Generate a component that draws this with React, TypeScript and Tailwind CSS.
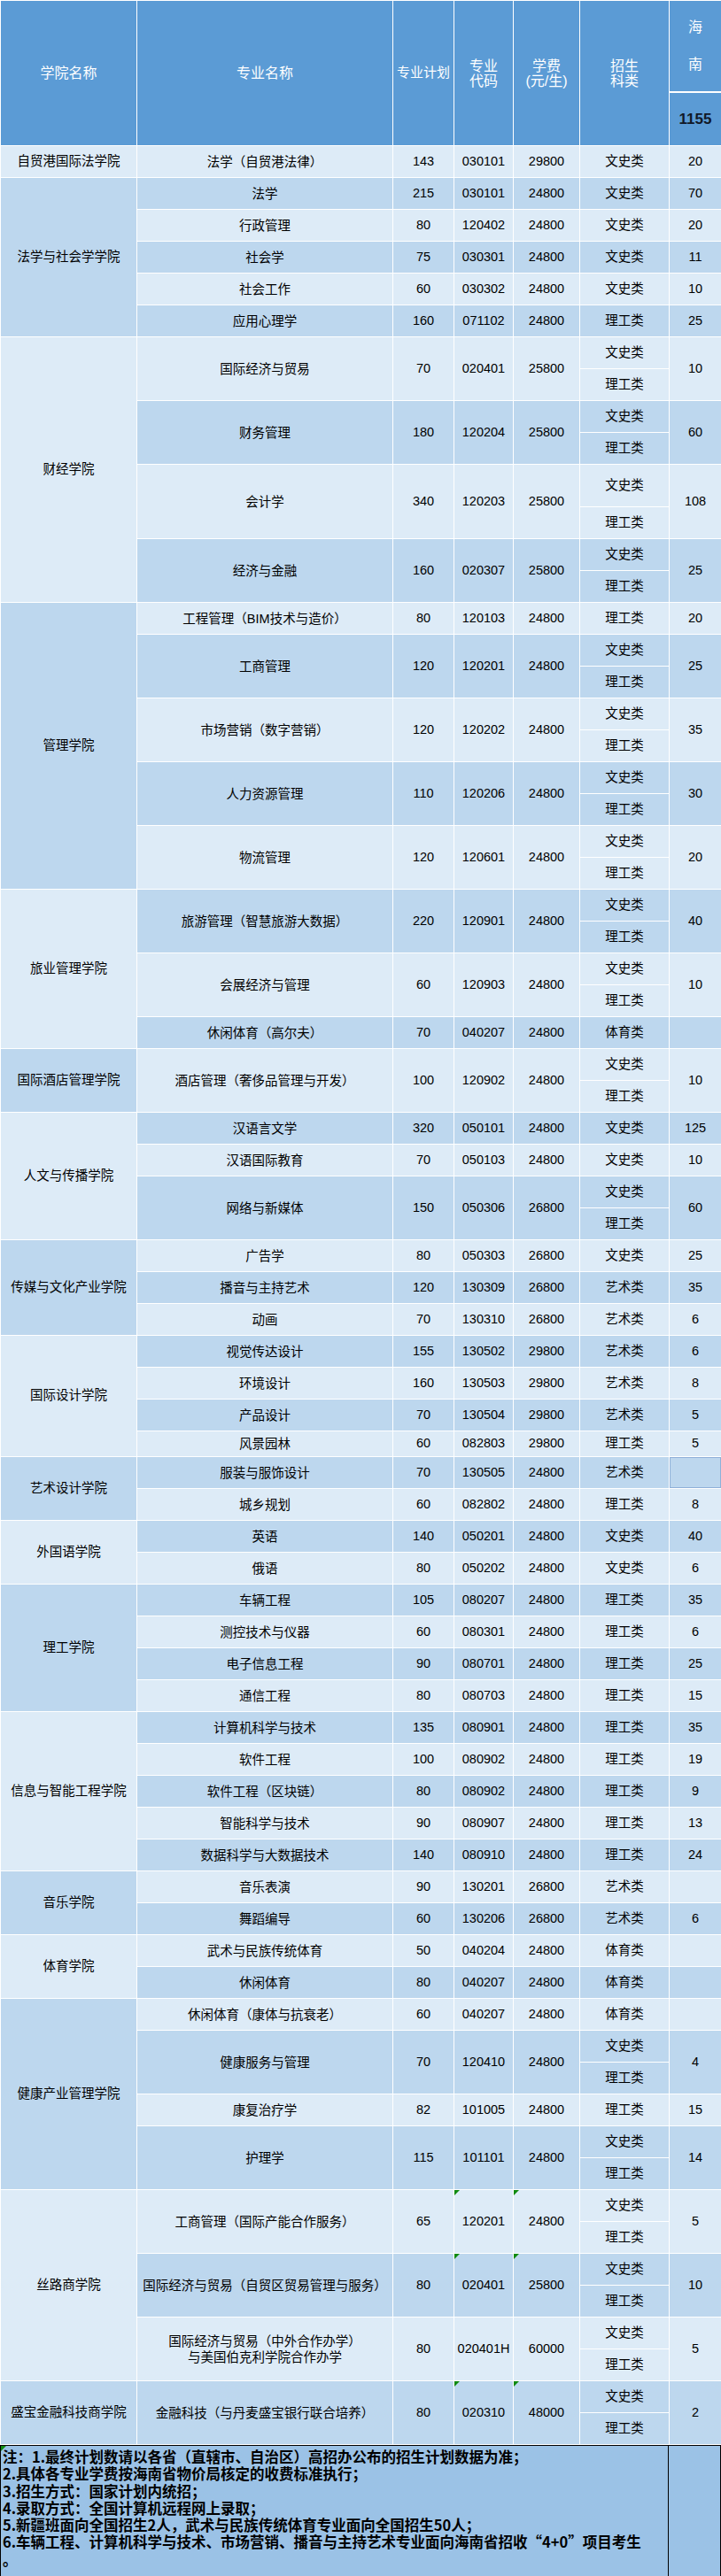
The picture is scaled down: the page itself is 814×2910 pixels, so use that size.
import React from "react";

type Major = {
  name: string[];
  plan: string;
  code: string;
  fee: string;
  types: string[];
  hn: string;
  h?: string[];
  tri?: boolean;
  outline?: boolean;
};

type College = { name: string; majors: Major[] };

const B = ["文史类", "理工类"];
const W = ["文史类"];
const S = ["理工类"];
const Y = ["艺术类"];
const T = ["体育类"];

const m = (
  name: string,
  plan: string,
  code: string,
  fee: string,
  types: string[],
  hn: string,
  extra: Partial<Major> = {}
): Major => ({ name: [name], plan, code, fee, types, hn, ...extra });

const colleges: College[] = [
  { name: "自贸港国际法学院", majors: [m("法学（自贸港法律）", "143", "030101", "29800", W, "20")] },
  {
    name: "法学与社会学学院",
    majors: [
      m("法学", "215", "030101", "24800", W, "70"),
      m("行政管理", "80", "120402", "24800", W, "20"),
      m("社会学", "75", "030301", "24800", W, "11"),
      m("社会工作", "60", "030302", "24800", W, "10"),
      m("应用心理学", "160", "071102", "24800", S, "25"),
    ],
  },
  {
    name: "财经学院",
    majors: [
      m("国际经济与贸易", "70", "020401", "25800", B, "10"),
      m("财务管理", "180", "120204", "25800", B, "60"),
      m("会计学", "340", "120203", "25800", B, "108", { h: ["h-[48px]", "h-[36px]"] }),
      m("经济与金融", "160", "020307", "25800", B, "25"),
    ],
  },
  {
    name: "管理学院",
    majors: [
      m("工程管理（BIM技术与造价）", "80", "120103", "24800", S, "20"),
      m("工商管理", "120", "120201", "24800", B, "25"),
      m("市场营销（数字营销）", "120", "120202", "24800", B, "35"),
      m("人力资源管理", "110", "120206", "24800", B, "30"),
      m("物流管理", "120", "120601", "24800", B, "20"),
    ],
  },
  {
    name: "旅业管理学院",
    majors: [
      m("旅游管理（智慧旅游大数据）", "220", "120901", "24800", B, "40"),
      m("会展经济与管理", "60", "120903", "24800", B, "10"),
      m("休闲体育（高尔夫）", "70", "040207", "24800", T, ""),
    ],
  },
  { name: "国际酒店管理学院", majors: [m("酒店管理（奢侈品管理与开发）", "100", "120902", "24800", B, "10")] },
  {
    name: "人文与传播学院",
    majors: [
      m("汉语言文学", "320", "050101", "24800", W, "125"),
      m("汉语国际教育", "70", "050103", "24800", W, "10"),
      m("网络与新媒体", "150", "050306", "26800", B, "60"),
    ],
  },
  {
    name: "传媒与文化产业学院",
    majors: [
      m("广告学", "80", "050303", "26800", W, "25"),
      m("播音与主持艺术", "120", "130309", "26800", Y, "35"),
      m("动画", "70", "130310", "26800", Y, "6"),
    ],
  },
  {
    name: "国际设计学院",
    majors: [
      m("视觉传达设计", "155", "130502", "29800", Y, "6"),
      m("环境设计", "160", "130503", "29800", Y, "8"),
      m("产品设计", "70", "130504", "29800", Y, "5"),
      m("风景园林", "60", "082803", "29800", S, "5", { h: ["h-[29px]"] }),
    ],
  },
  {
    name: "艺术设计学院",
    majors: [
      m("服装与服饰设计", "70", "130505", "24800", Y, "", { outline: true }),
      m("城乡规划", "60", "082802", "24800", S, "8"),
    ],
  },
  {
    name: "外国语学院",
    majors: [m("英语", "140", "050201", "24800", W, "40"), m("俄语", "80", "050202", "24800", W, "6")],
  },
  {
    name: "理工学院",
    majors: [
      m("车辆工程", "105", "080207", "24800", S, "35"),
      m("测控技术与仪器", "60", "080301", "24800", S, "6"),
      m("电子信息工程", "90", "080701", "24800", S, "25"),
      m("通信工程", "80", "080703", "24800", S, "15"),
    ],
  },
  {
    name: "信息与智能工程学院",
    majors: [
      m("计算机科学与技术", "135", "080901", "24800", S, "35"),
      m("软件工程", "100", "080902", "24800", S, "19"),
      m("软件工程（区块链）", "80", "080902", "24800", S, "9"),
      m("智能科学与技术", "90", "080907", "24800", S, "13"),
      m("数据科学与大数据技术", "140", "080910", "24800", S, "24"),
    ],
  },
  {
    name: "音乐学院",
    majors: [m("音乐表演", "90", "130201", "26800", Y, ""), m("舞蹈编导", "60", "130206", "26800", Y, "6")],
  },
  {
    name: "体育学院",
    majors: [m("武术与民族传统体育", "50", "040204", "24800", T, ""), m("休闲体育", "80", "040207", "24800", T, "")],
  },
  {
    name: "健康产业管理学院",
    majors: [
      m("休闲体育（康体与抗衰老）", "60", "040207", "24800", T, ""),
      m("健康服务与管理", "70", "120410", "24800", B, "4"),
      m("康复治疗学", "82", "101005", "24800", S, "15"),
      m("护理学", "115", "101101", "24800", B, "14"),
    ],
  },
  {
    name: "丝路商学院",
    majors: [
      m("工商管理（国际产能合作服务）", "65", "120201", "24800", B, "5", { tri: true }),
      m("国际经济与贸易（自贸区贸易管理与服务）", "80", "020401", "25800", B, "10", { tri: true }),
      {
        name: ["国际经济与贸易（中外合作办学）", "与美国伯克利学院合作办学"],
        plan: "80",
        code: "020401H",
        fee: "60000",
        types: B,
        hn: "5",
      },
    ],
  },
  {
    name: "盛宝金融科技商学院",
    majors: [m("金融科技（与丹麦盛宝银行联合培养）", "80", "020310", "48000", B, "2", { tri: true })],
  },
];

const notes = [
  "注：1.最终计划数请以各省（直辖市、自治区）高招办公布的招生计划数据为准；",
  "2.具体各专业学费按海南省物价局核定的收费标准执行；",
  "3.招生方式：国家计划内统招；",
  "4.录取方式：全国计算机远程网上录取；",
  "5.新疆班面向全国招生2人，武术与民族传统体育专业面向全国招生50人；",
  "6.车辆工程、计算机科学与技术、市场营销、播音与主持艺术专业面向海南省招收“4+0”项目考生",
  "。",
];

const cell = "border border-white text-center align-middle p-0";

function Tri() {
  return (
    <span className="absolute left-0 top-0 w-0 h-0 border-t-[6px] border-t-[#0f8a0f] border-r-[6px] border-r-transparent" />
  );
}

export default function App() {
  const rows: React.ReactNode[] = [];
  let band = 0;

  colleges.forEach((c, ci) => {
    const span = c.majors.reduce((s, x) => s + x.types.length, 0);
    const cbg = ci % 2 === 0 ? "bg-[#ddebf7]" : "bg-[#bdd7ee]";
    c.majors.forEach((mj, mi) => {
      const bg = band % 2 === 0 ? "bg-[#ddebf7]" : "bg-[#bdd7ee]";
      band++;
      const n = mj.types.length;
      mj.types.forEach((t, ti) => {
        const h = mj.h ? mj.h[ti] : "h-[36px]";
        rows.push(
          <tr key={`${ci}-${mi}-${ti}`} className={h}>
            {mi === 0 && ti === 0 && (
              <td rowSpan={span} className={`${cell} ${cbg}`}>
                {c.name}
              </td>
            )}
            {ti === 0 && (
              <>
                <td rowSpan={n} className={`${cell} ${bg} leading-[18px]`}>
                  {mj.name.map((l) => (
                    <div key={l} className="whitespace-nowrap">
                      {l}
                    </div>
                  ))}
                </td>
                <td rowSpan={n} className={`${cell} ${bg}`}>
                  {mj.plan}
                </td>
                <td rowSpan={n} className={`${cell} ${bg} relative`}>
                  {mj.tri && <Tri />}
                  {mj.code}
                </td>
                <td rowSpan={n} className={`${cell} ${bg} relative`}>
                  {mj.tri && <Tri />}
                  {mj.fee}
                </td>
              </>
            )}
            <td className={`${cell} ${bg}`}>{t}</td>
            {ti === 0 && (
              <td
                rowSpan={n}
                className={`${cell} ${bg} ${mj.outline ? "shadow-[inset_0_0_0_1px_#8fb0d8]" : ""}`}
              >
                {mj.hn}
              </td>
            )}
          </tr>
        );
      });
    });
  });

  return (
    <div className="w-[814px] bg-white text-black text-[14.5px] font-['Liberation_Sans','Noto_Sans_CJK_SC',sans-serif]">
      <table className="w-[814px] table-fixed border-collapse">
        <colgroup>
          <col className="w-[154px]" />
          <col className="w-[289px]" />
          <col className="w-[69px]" />
          <col className="w-[67px]" />
          <col className="w-[75px]" />
          <col className="w-[101px]" />
          <col className="w-[59px]" />
        </colgroup>
        <thead>
          <tr className="h-[103px]">
            <th rowSpan={2} className={`${cell} bg-[#5b9bd5] text-white font-normal text-[16px]`}>
              学院名称
            </th>
            <th rowSpan={2} className={`${cell} bg-[#5b9bd5] text-white font-normal text-[16px]`}>
              专业名称
            </th>
            <th rowSpan={2} className={`${cell} bg-[#5b9bd5] text-white font-normal text-[15px] whitespace-nowrap`}>
              专业计划
            </th>
            <th rowSpan={2} className={`${cell} bg-[#5b9bd5] text-white font-normal text-[16px] leading-[17px]`}>
              专业
              <br />
              代码
            </th>
            <th rowSpan={2} className={`${cell} bg-[#5b9bd5] text-white font-normal text-[16px] leading-[17px]`}>
              学费
              <br />
              (元/生)
            </th>
            <th rowSpan={2} className={`${cell} bg-[#5b9bd5] text-white font-normal text-[16px] leading-[17px]`}>
              招生
              <br />
              科类
            </th>
            <th className={`${cell} bg-[#5b9bd5] text-white font-normal text-[16px]`}>
              <div className="flex flex-col items-center gap-[18px]">
                <span>海</span>
                <span>南</span>
              </div>
            </th>
          </tr>
          <tr className="h-[61px]">
            <th className={`${cell} border-t-2 bg-[#5b9bd5] text-[#111827] font-bold text-[17px]`}>1155</th>
          </tr>
        </thead>
        <tbody>{rows}</tbody>
      </table>
      <div className="flex h-[150px] border border-black bg-[#9bc2e6] font-['Noto_Sans_CJK_SC',sans-serif] font-bold text-[16.5px] leading-[19.3px]">
        <div className="relative w-[754px] shrink-0 border-r border-black pl-[2px] pt-[3px] overflow-hidden">
          <Tri />
          {notes.map((l) => (
            <div key={l} className="whitespace-nowrap">
              {l}
            </div>
          ))}
        </div>
        <div className="flex-1" />
      </div>
    </div>
  );
}
